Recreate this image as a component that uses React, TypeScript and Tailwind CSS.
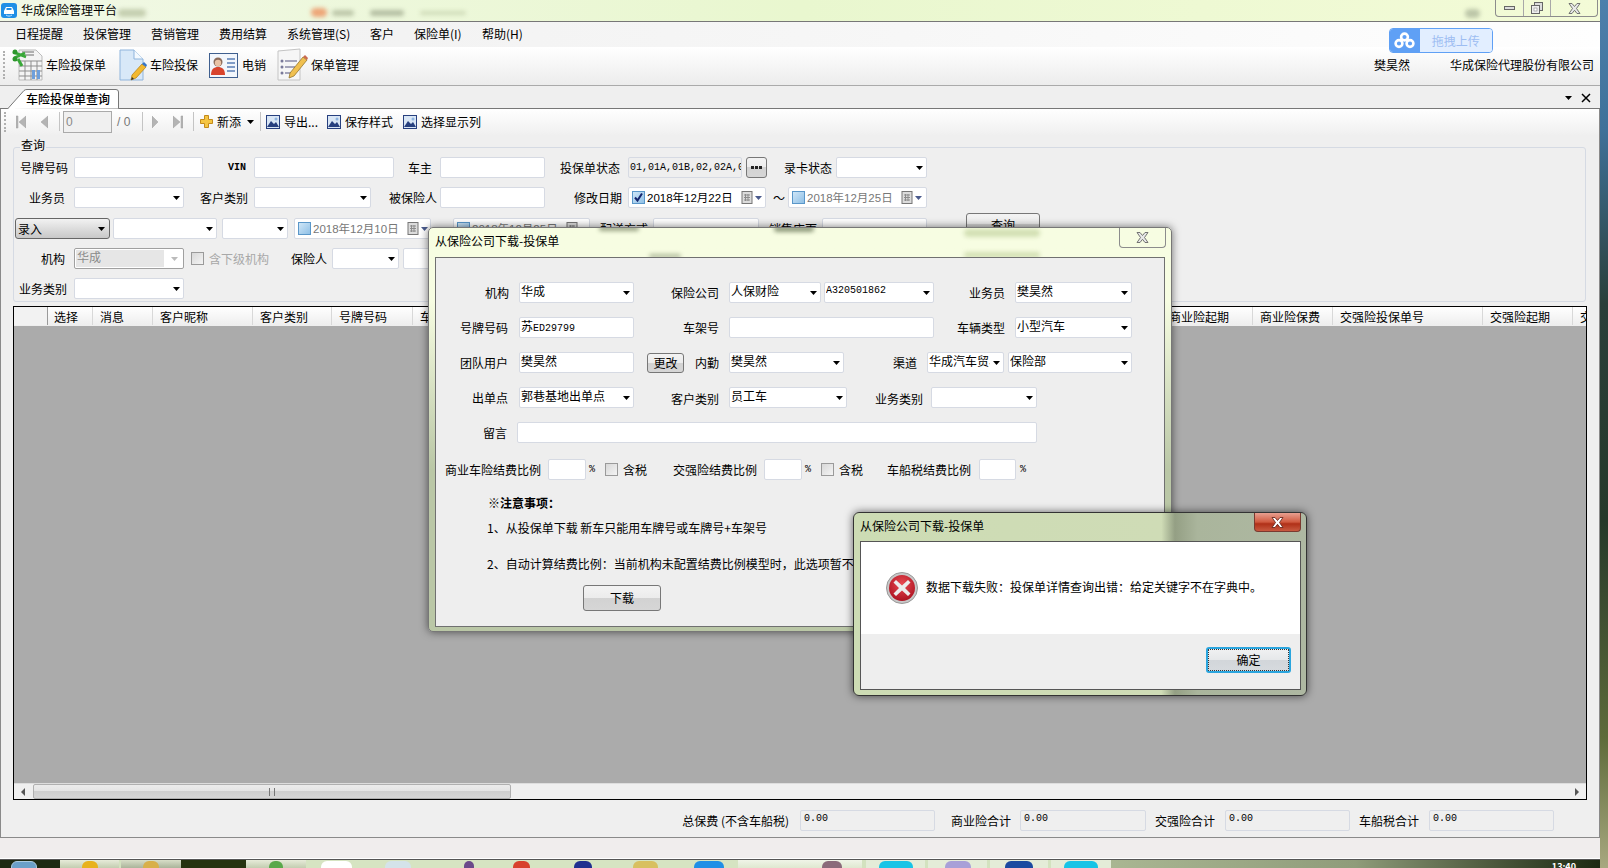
import React from "react";

const MONO = "[font-family:'Liberation_Mono','Noto_Sans_CJK_SC',monospace] text-[10px]";

function Lbl({ className = "", children }: { className?: string; children: React.ReactNode }) {
  return <span className={"shrink-0 whitespace-nowrap text-right text-[12px] leading-[14px] text-black " + className}>{children}</span>;
}
function Arrow({ color = "#000" }: { color?: string }) {
  return (
    <svg width="7" height="4" viewBox="0 0 7 4" className="shrink-0">
      <path d="M0 0h7L3.500 4z" fill={color} />
    </svg>
  );
}
function Input({ className = "", mono = false, children }: { className?: string; mono?: boolean; children?: React.ReactNode }) {
  return (
    <div className={"h-[21px] shrink-0 overflow-hidden whitespace-nowrap rounded-[2px] border border-[#d6dae3] bg-white pl-[1px] pt-[1px] leading-[14px] text-black " + (mono ? MONO + " " : "text-[12px] ") + className}>
      {children}
    </div>
  );
}
function Sel({ className = "", mono = false, children }: { className?: string; mono?: boolean; children?: React.ReactNode }) {
  return (
    <div className={"flex h-[21px] shrink-0 items-center justify-between overflow-hidden rounded-[2px] border border-[#d6dae3] bg-white pl-[1px] pr-[3px] text-[12px] leading-[14px] text-black " + className}>
      <span className={"-mt-[3px] overflow-hidden whitespace-nowrap " + (mono ? MONO : "")}>{children}</span>
      <Arrow />
    </div>
  );
}
function Check({ className = "", on = false, blue = false }: { className?: string; on?: boolean; blue?: boolean }) {
  return (
    <div className={"flex h-[13px] w-[13px] shrink-0 items-center justify-center border " + (blue ? "border-[#5a97c9] bg-gradient-to-br from-[#cfe6f7] to-[#8fc0e6] " : "border-[#9a9a9a] bg-gradient-to-br from-[#d8d8d8] to-[#f4f4f4] ") + className}>
      {on && (
        <svg width="11" height="11" viewBox="0 0 11 11">
          <path d="M2 5.500l2.500 3L9 1.500" fill="none" stroke="#15256e" strokeWidth="2" />
        </svg>
      )}
    </div>
  );
}
function Cal() {
  return (
    <svg width="12" height="13" viewBox="0 0 12 13" className="shrink-0">
      <rect x="1" y="0.500" width="10" height="12" fill="#dcdcdc" stroke="#777" />
      <path d="M3 4h6M3 6.500h6M3 9h6M4.500 3v7M7 3v7" stroke="#8c8c8c" strokeWidth="1" />
    </svg>
  );
}
function DateBox({ className = "", on = false, text, dim = false }: { className?: string; on?: boolean; text: string; dim?: boolean }) {
  return (
    <div className={"flex h-[21px] shrink-0 items-center overflow-hidden rounded-[2px] border border-[#d6dae3] bg-white pl-[3px] " + className}>
      <Check on={on} blue />
      <span className={"ml-[2px] w-[94px] shrink-0 whitespace-nowrap text-[11.5px] leading-[14px] [font-family:'Liberation_Sans','Noto_Sans_CJK_SC',sans-serif] " + (dim ? "text-[#777]" : "text-black")}>{text}</span>
      <Cal />
      <span className="ml-[2px] flex"><Arrow color="#4a5a8c" /></span>
    </div>
  );
}
function Btn({ className = "", children }: { className?: string; children: React.ReactNode }) {
  return (
    <div className={"flex shrink-0 items-center justify-center rounded-[3px] border border-[#777] bg-[linear-gradient(#f3f3f3_0%,#ececec_48%,#d2d2d2_50%,#d6d6d6_100%)] text-[12px] leading-[14px] text-black " + className}>
      {children}
    </div>
  );
}
function PicIcon() {
  return (
    <svg width="14" height="14" viewBox="0 0 14 14" className="shrink-0">
      <rect x="0.500" y="0.500" width="13" height="13" fill="#d9e6f5" stroke="#27407f" />
      <path d="M1 12l4-6 3 3 2-2 3 5z" fill="#27407f" />
      <circle cx="10" cy="4" r="1.500" fill="#8eb4e0" />
    </svg>
  );
}
function Sep({ className = "" }: { className?: string }) {
  return <div className={"h-[19px] w-px shrink-0 bg-[#c4c4c4] " + className} />;
}
function CloseGlyph({ color = "#e8e8e8", stroke = "#666" }: { color?: string; stroke?: string }) {
  return (
    <svg width="13" height="11" viewBox="0 0 13 11">
      <path d="M1 0.500h3l2.500 3 2.500-3h3L8.500 5.500l3.500 5H9l-2.500-3.200L4 10.500H1l3.500-5z" fill={color} stroke={stroke} strokeWidth="0.900" />
    </svg>
  );
}

function Ico1() {
  return (
    <svg width="31" height="32" viewBox="0 0 31 32" className="shrink-0">
      <path d="M7 1h17l6 6v24H7z" fill="#f4f4f4" stroke="#bbb" />
      <path d="M7 12h23M7 17h23M7 22h23M7 27h23M13 12v19M19 12v19M25 12v19" stroke="#8d8d8d" strokeWidth="1" />
      <path d="M10 3h12M10 6h12" stroke="#999" strokeWidth="1.500" />
      <rect x="20" y="21" width="3" height="9" fill="#6d9fdc" />
      <rect x="25" y="21" width="3" height="9" fill="#6d9fdc" />
      <path d="M1 3l13 5M2 9l11-5" stroke="#38a838" strokeWidth="2.500" />
      <circle cx="3" cy="3" r="2.500" fill="#2c962c" />
      <circle cx="3" cy="10" r="2.500" fill="#2c962c" />
      <path d="M6 10l4 7" stroke="#38a838" strokeWidth="3" />
    </svg>
  );
}
function Ico2() {
  return (
    <svg width="28" height="32" viewBox="0 0 28 32" className="shrink-0">
      <path d="M1 1h14l9 9v21H1z" fill="#d8e8f8" stroke="#8fb4dc" />
      <path d="M15 1v9h9" fill="#f4f9fe" stroke="#8fb4dc" />
      <path d="M13 26l-1 5 5-2 10-11-4-3z" fill="#f3b92f" stroke="#b27c10" strokeWidth="0.700" />
      <path d="M23 15l4 3 1-2-3-3z" fill="#3776c8" />
      <path d="M12 31l1-3 2 2z" fill="#333" />
    </svg>
  );
}
function Ico3() {
  return (
    <svg width="29" height="25" viewBox="0 0 29 25" className="shrink-0">
      <rect x="0.500" y="0.500" width="28" height="24" fill="#f2f6fc" stroke="#3f5f8f" />
      <circle cx="9" cy="9" r="4.500" fill="#8a6a5a" />
      <circle cx="9" cy="10" r="3.200" fill="#e9c3a6" />
      <path d="M2 22c0-6 3-8 7-8s7 2 7 8z" fill="#d8442e" />
      <path d="M18 6h8M18 10h8M18 14h8M18 18h8" stroke="#5b7fb5" strokeWidth="1.400" />
    </svg>
  );
}
function Ico4() {
  return (
    <svg width="31" height="34" viewBox="0 0 31 34" className="shrink-0">
      <path d="M1 3l22-2v31H1z" fill="#f6f6f6" stroke="#c4c4c4" />
      <path d="M8 13h12M8 19h10M8 25h11" stroke="#8a8aa6" strokeWidth="1.400" />
      <circle cx="5" cy="13" r="1.500" fill="#7a7a9a" />
      <circle cx="5" cy="19" r="1.500" fill="#7a7a9a" />
      <circle cx="5" cy="25" r="1.500" fill="#7a7a9a" />
      <path d="M13 25l-1 5 5-2 13-16-4-3z" fill="#f0c050" stroke="#8a6a20" strokeWidth="0.700" />
      <path d="M26 9l4 3 1-2-3-3z" fill="#c96a50" />
    </svg>
  );
}
function NavGlyph({ d, w = 10 }: { d: string; w?: number }) {
  return (
    <svg width={w} height="14" viewBox={`0 0 ${w} 14`} className="shrink-0">
      <path d={d} fill="#b4b4b4" stroke="#a0a0a0" strokeWidth="0.500" />
    </svg>
  );
}
function Blur({ className }: { className: string }) {
  return <div className={"absolute rounded-full blur-[2px] " + className} />;
}
function Top({ className }: { className: string }) {
  return <div className={"mt-[1px] h-[8px] shrink-0 rounded-t-[6px] " + className} />;
}

export default function App() {
  return (
    <div className="relative flex h-[868px] w-[1608px] overflow-hidden bg-white [font-family:'Noto_Sans_CJK_SC','Liberation_Sans',sans-serif]">
      <div className="flex h-full w-[1600px] shrink-0 flex-col">
        {/* title */}
        <div className="relative flex h-[22px] shrink-0 items-start justify-between border-b border-[#777] bg-gradient-to-r from-[#f1f8e6] via-[#e9f7cf] to-[#f3fbd7]">
          <Blur className="left-[118px] top-[9px] h-[8px] w-[28px] bg-[#c5cfb0]" />
          <Blur className="left-[311px] top-[8px] h-[9px] w-[16px] bg-[#eda678]" />
          <Blur className="left-[332px] top-[10px] h-[6px] w-[22px] bg-[#bcc6a8]" />
          <Blur className="left-[370px] top-[10px] h-[6px] w-[34px] bg-[#b4bea2]" />
          <Blur className="left-[420px] top-[11px] h-[4px] w-[46px] bg-[#cfdbb8]" />
          <Blur className="left-[1465px] top-[9px] h-[9px] w-[15px] bg-[#bcc6a8]" />
          <div className="flex items-center">
            <svg width="16" height="15" viewBox="0 0 16 15" className="ml-[1px] mt-[3px]">
              <rect width="16" height="15" rx="3" fill="#1f8fe6" />
              <path d="M3 8l2-4h6l2 4v3H3z" fill="#fff" />
              <path d="M5 12c2 1.500 4 1.500 6 0" stroke="#bfe2ff" fill="none" />
              <rect x="5.500" y="5" width="5" height="2" fill="#1f8fe6" />
            </svg>
            <span className="ml-[4px] mt-[1px] text-[12px] leading-[14px] text-black">华成保险管理平台</span>
          </div>
          <div className="mr-[2px] flex h-[17px] items-stretch rounded-b-[4px] border border-t-0 border-[#8c8c8c]">
            <div className="flex w-[28px] items-center justify-center border-r border-[#a8a8a8]"><div className="h-[4px] w-[11px] border border-[#666] bg-[#ddd]" /></div>
            <div className="flex w-[27px] items-center justify-center border-r border-[#a8a8a8]">
              <svg width="12" height="12" viewBox="0 0 12 12"><rect x="3.500" y="0.500" width="8" height="8" fill="#ddd" stroke="#666" /><rect x="0.500" y="3.500" width="8" height="8" fill="#eee" stroke="#666" /><rect x="3" y="6" width="3" height="3" fill="#fff" stroke="#888" strokeWidth="0.600" /></svg>
            </div>
            <div className="flex w-[46px] items-center justify-center"><CloseGlyph /></div>
          </div>
        </div>
        {/* menu */}
        <div className="flex h-[25px] shrink-0 items-center bg-gradient-to-r from-[#f0f0f0] via-[#f6f6f6] to-[#fefefe] pb-[2px] pl-[15px] text-[12px] leading-[14px] text-black">
          <span className="w-[68px] shrink-0">日程提醒</span>
          <span className="w-[68px] shrink-0">投保管理</span>
          <span className="w-[68px] shrink-0">营销管理</span>
          <span className="w-[68px] shrink-0">费用结算</span>
          <span className="w-[83px] shrink-0">系统管理(S)</span>
          <span className="w-[44px] shrink-0">客户</span>
          <span className="w-[68px] shrink-0">保险单(I)</span>
          <span className="shrink-0">帮助(H)</span>
          <div className="z-10 ml-[866px] mt-[6px] flex h-[25px] w-[104px] shrink-0 self-start overflow-hidden rounded-[4px] border border-[#5fa0f5]">
            <div className="flex w-[30px] items-center justify-center bg-[#5fa0f5]">
              <svg width="21" height="17" viewBox="0 0 21 17">
                <g fill="none" stroke="#fff" strokeWidth="2.600">
                  <circle cx="10.500" cy="5" r="3.400" />
                  <circle cx="5" cy="11.500" r="3.400" />
                  <circle cx="16" cy="11.500" r="3.400" />
                </g>
              </svg>
            </div>
            <div className="flex flex-1 items-center justify-center bg-[#e2eeff] text-[12px] text-[#9dbdf2]">拖拽上传</div>
          </div>
        </div>
        {/* toolbar */}
        <div className="flex h-[39px] shrink-0 items-center border-b border-[#aaa] bg-gradient-to-b from-white to-[#ececec] pb-[2px] text-[12px] leading-[14px] text-black">
          <div className="ml-[3px] h-[28px] w-[2px] shrink-0 border-l-2 border-dotted border-[#b0b0b0]" />
          <div className="ml-[7px]"><Ico1 /></div>
          <span className="ml-[3px] w-[60px] shrink-0 whitespace-nowrap">车险投保单</span>
          <div className="ml-[13px]"><Ico2 /></div>
          <span className="ml-[3px] w-[48px] shrink-0 whitespace-nowrap">车险投保</span>
          <div className="ml-[11px]"><Ico3 /></div>
          <span className="ml-[4px] w-[24px] shrink-0 whitespace-nowrap">电销</span>
          <div className="ml-[11px]"><Ico4 /></div>
          <span className="ml-[3px] w-[48px] shrink-0 whitespace-nowrap">保单管理</span>
          <span className="ml-[1015px] w-[36px] shrink-0 whitespace-nowrap">樊昊然</span>
          <span className="ml-[40px] w-[144px] shrink-0 whitespace-nowrap">华成保险代理股份有限公司</span>
        </div>
        {/* tab strip */}
        <div className="flex h-[23px] shrink-0 items-end border-b border-[#777] bg-[#efefef]">
          <div className="relative -mb-px ml-[7px] flex h-[20px] w-[112px] shrink-0 items-center pl-[19px]">
            <svg width="112" height="20" viewBox="0 0 112 20" className="absolute left-0 top-0">
              <path d="M0.500 20L17 1.500Q18 0.500 20 0.500H109Q111.500 0.500 111.500 3V19.500" fill="#fff" stroke="#777" />
            </svg>
            <span className="relative whitespace-nowrap text-[12px] font-medium leading-[14px] text-black">车险投保单查询</span>
          </div>
          <div className="flex-1" />
          <div className="mb-[5px] mr-[9px] flex items-center">
            <Arrow />
            <svg width="10" height="10" viewBox="0 0 10 10" className="ml-[9px]"><path d="M1 1l8 8M9 1l-8 8" stroke="#000" strokeWidth="1.500" /></svg>
          </div>
        </div>
        {/* main */}
        <div className="flex min-h-0 flex-1 flex-col border-b border-l border-r border-[#8a8a8a] bg-[#efefef]">
          {/* sub toolbar */}
          <div className="flex h-[27px] shrink-0 items-center bg-gradient-to-b from-white to-[#efefef] pb-[2px] text-[12px] leading-[14px] text-black">
            <div className="ml-[3px] h-[20px] w-[2px] shrink-0 border-l-2 border-dotted border-[#b0b0b0]" />
            <div className="ml-[10px]"><NavGlyph d="M0 1h2v12H0zM10 1v12L3 7z" /></div>
            <div className="ml-[15px]"><NavGlyph w={7} d="M7 1v12L0 7z" /></div>
            <Sep className="ml-[11px]" />
            <div className="ml-[3px] h-[22px] w-[49px] shrink-0 border border-[#aaa] bg-[#f0f0f0] pl-[2px] pt-[3px] text-[#888] [font-family:'Liberation_Sans',sans-serif]">0</div>
            <span className="ml-[5px] w-[19px] shrink-0 text-[#777] [font-family:'Liberation_Sans',sans-serif]">/ 0</span>
            <Sep className="ml-[6px]" />
            <div className="ml-[9px]"><NavGlyph w={6} d="M0 1v12l6-6z" /></div>
            <div className="ml-[15px]"><NavGlyph d="M0 1v12l7-6zM8 1h2v12H8z" /></div>
            <Sep className="ml-[10px]" />
            <svg width="13" height="13" viewBox="0 0 13 13" className="ml-[6px] shrink-0">
              <path d="M4.500 0.500h4v4h4v4h-4v4h-4v-4h-4v-4h4z" fill="#f5c542" stroke="#c48a1a" />
            </svg>
            <span className="ml-[4px] w-[24px] shrink-0 whitespace-nowrap">新添</span>
            <span className="ml-[6px] flex"><Arrow /></span>
            <Sep className="ml-[6px]" />
            <div className="ml-[5px]"><PicIcon /></div>
            <span className="ml-[4px] w-[34px] shrink-0 whitespace-nowrap">导出...</span>
            <div className="ml-[9px]"><PicIcon /></div>
            <span className="ml-[4px] w-[48px] shrink-0 whitespace-nowrap">保存样式</span>
            <div className="ml-[10px]"><PicIcon /></div>
            <span className="ml-[4px] w-[60px] shrink-0 whitespace-nowrap">选择显示列</span>
          </div>
          {/* query */}
          <div className="relative ml-[12px] mt-[11px] h-[155px] w-[1573px] shrink-0 rounded-[3px] border border-[#d5dae3]">
            <span className="absolute -top-[10px] left-[6px] bg-[#efefef] px-[1px] text-[12px] leading-[14px] text-black">查询</span>
            <div className="mt-[9px] flex h-[21px] items-center">
              <Lbl className="ml-[5px] w-[49px]">号牌号码</Lbl>
              <Input className="ml-[6px] w-[129px]" />
              <span className={"ml-[25px] w-[18px] shrink-0 font-bold leading-[14px] text-black " + MONO}>VIN</span>
              <Input className="ml-[8px] w-[140px]" />
              <Lbl className="ml-[14px] w-[24px]">车主</Lbl>
              <Input className="ml-[8px] w-[105px]" />
              <Lbl className="ml-[15px] w-[60px]">投保单状态</Lbl>
              <Input mono className="ml-[8px] w-[114px] !bg-[#efefef] !pt-[3px]">01,01A,01B,02,02A,0</Input>
              <Btn className="ml-[4px] h-[21px] w-[21px]">
                <svg width="11" height="3" viewBox="0 0 11 3"><path d="M0 0h3v3H0zM4 0h3v3H4zM8 0h3v3H8z" fill="#222" /></svg>
              </Btn>
              <Lbl className="ml-[16px] w-[49px]">录卡状态</Lbl>
              <Sel className="ml-[4px] w-[91px]" />
            </div>
            <div className="mt-[9px] flex h-[21px] items-center">
              <Lbl className="ml-[15px] w-[36px]">业务员</Lbl>
              <Sel className="ml-[9px] w-[110px]" />
              <Lbl className="ml-[15px] w-[49px]">客户类别</Lbl>
              <Sel className="ml-[6px] w-[117px]" />
              <Lbl className="ml-[18px] w-[47px]">被保险人</Lbl>
              <Input className="ml-[4px] w-[105px]" />
              <Lbl className="ml-[28px] w-[49px]">修改日期</Lbl>
              <DateBox className="ml-[6px] w-[138px]" on text="2018年12月22日" />
              <span className="ml-[4px] w-[18px] shrink-0 text-center text-[12px] leading-[14px] text-black">～</span>
              <DateBox className="w-[139px]" dim text="2018年12月25日" />
            </div>
            <div className="mt-[10px] flex h-[21px] items-center">
              <div className="ml-[1px] flex h-[21px] w-[95px] shrink-0 items-center justify-between rounded-[3px] border border-[#666] bg-gradient-to-b from-[#f2f2f2] to-[#c8c8c8] pl-[2px] pr-[4px] text-[12px] leading-[14px] text-black">
                <span>录入</span><Arrow />
              </div>
              <Sel className="ml-[3px] w-[104px]" />
              <Sel className="ml-[5px] w-[66px]" />
              <DateBox className="ml-[6px] w-[137px]" dim text="2018年12月10日" />
              <DateBox className="ml-[22px] w-[137px]" dim text="2018年12月25日" />
              <Lbl className="ml-[8px] w-[50px]">配送方式</Lbl>
              <Sel className="ml-[5px] w-[106px]" />
              <Lbl className="ml-[10px] w-[46px]">销售店面</Lbl>
              <Sel className="ml-[7px] w-[105px]" />
              <Btn className="ml-[39px] -mt-[8px] h-[23px] w-[74px]">查询</Btn>
            </div>
            <div className="mt-[9px] flex h-[21px] items-center">
              <Lbl className="ml-[27px] w-[24px]">机构</Lbl>
              <div className="ml-[9px] flex h-[21px] w-[110px] shrink-0 items-center justify-between rounded-[2px] border border-[#a0a0a0] bg-white p-[1px] pr-[5px]">
                <span className="flex h-full w-[88px] bg-[#e6e6e6] pl-[1px] text-[12px] leading-[14px] text-[#8a8a8a]">华成</span>
                <Arrow color="#bbb" />
              </div>
              <Check className="ml-[7px]" />
              <Lbl className="ml-[5px] w-[60px] !text-[#a8a8a8]">含下级机构</Lbl>
              <Lbl className="ml-[22px] w-[36px]">保险人</Lbl>
              <Sel className="ml-[5px] w-[67px]" />
              <Input className="ml-[4px] w-[100px]" />
            </div>
            <div className="mt-[9px] flex h-[21px] items-center">
              <Lbl className="ml-[3px] w-[50px]">业务类别</Lbl>
              <Sel className="ml-[7px] w-[110px]" />
            </div>
          </div>
          {/* grid */}
          <div className="ml-[12px] mt-[4px] flex h-[494px] w-[1574px] shrink-0 flex-col border border-black bg-[#ababab]">
            <div className="flex h-[19px] shrink-0 border-b border-[#eee] bg-gradient-to-b from-white to-[#eeeeee] text-[12px] leading-[20px] text-black">
              <div className="w-[34px] shrink-0 border-r border-[#9a9a9a] bg-[#f2f2f2]" />
              <div className="w-[45px] shrink-0 overflow-hidden border-r border-[#d8d8d8] pl-[6px]">选择</div>
              <div className="w-[60px] shrink-0 overflow-hidden border-r border-[#d8d8d8] pl-[7px]">消息</div>
              <div className="w-[100px] shrink-0 overflow-hidden border-r border-[#d8d8d8] pl-[7px]">客户昵称</div>
              <div className="w-[79px] shrink-0 overflow-hidden border-r border-[#d8d8d8] pl-[7px]">客户类别</div>
              <div className="w-[81px] shrink-0 overflow-hidden border-r border-[#d8d8d8] pl-[7px]">号牌号码</div>
              <div className="w-[749px] shrink-0 overflow-hidden border-r border-[#d8d8d8] pl-[7px]">车架号</div>
              <div className="w-[91px] shrink-0 overflow-hidden border-r border-[#d8d8d8] pl-[7px]">商业险起期</div>
              <div className="w-[80px] shrink-0 overflow-hidden border-r border-[#d8d8d8] pl-[7px]">商业险保费</div>
              <div className="w-[150px] shrink-0 overflow-hidden border-r border-[#d8d8d8] pl-[7px]">交强险投保单号</div>
              <div className="w-[90px] shrink-0 overflow-hidden border-r border-[#d8d8d8] pl-[7px]">交强险起期</div>
              <div className="flex-1 overflow-hidden whitespace-nowrap pl-[7px]">交</div>
            </div>
            <div className="flex-1 bg-[#ababab]" />
            <div className="flex h-[16px] shrink-0 items-center border-t border-[#ddd] bg-[#efefef]">
              <svg width="4" height="8" viewBox="0 0 4 8" className="ml-[7px] shrink-0"><path d="M4 0v8L0 4z" fill="#555" /></svg>
              <div className="ml-[8px] flex h-[15px] w-[478px] shrink-0 items-center justify-center rounded-[2px] border border-[#b0b0b0] bg-[linear-gradient(#ececec_0%,#e4e4e4_45%,#cfcfcf_50%,#d6d6d6_100%)]">
                <div className="h-[8px] w-[6px] border-x border-[#777] bg-[linear-gradient(90deg,transparent_40%,#777_40%,#777_60%,transparent_60%)]" />
              </div>
              <div className="flex-1" />
              <svg width="4" height="8" viewBox="0 0 4 8" className="mr-[7px] shrink-0"><path d="M0 0v8l4-4z" fill="#555" /></svg>
            </div>
          </div>
          {/* footer */}
          <div className="flex flex-1 items-center pt-[3px]">
            <Lbl className="ml-[681px] mt-[2px] w-[107px]">总保费 (不含车船税)</Lbl>
            <Input mono className="ml-[11px] w-[135px] !bg-[#efefef] !pl-[3px]">0.00</Input>
            <Lbl className="ml-[16px] mt-[2px] w-[59px]">商业险合计</Lbl>
            <Input mono className="ml-[10px] w-[126px] !bg-[#efefef] !pl-[3px]">0.00</Input>
            <Lbl className="ml-[9px] mt-[2px] w-[59px]">交强险合计</Lbl>
            <Input mono className="ml-[11px] w-[125px] !bg-[#efefef] !pl-[3px]">0.00</Input>
            <Lbl className="ml-[9px] mt-[2px] w-[58px]">车船税合计</Lbl>
            <Input mono className="ml-[12px] w-[125px] !bg-[#efefef] !pl-[3px]">0.00</Input>
          </div>
        </div>
        {/* status bar */}
        <div className="h-[20px] shrink-0 bg-[#f0eded]" />
        <div className="h-[1px] shrink-0 bg-white" />
        {/* taskbar */}
        <div className="flex h-[9px] shrink-0 overflow-hidden border-t border-[#555] bg-[#d3e2bf]">
          <div className="flex w-[60px] shrink-0 justify-start bg-[#1d2a12] pl-[11px]"><Top className="w-[26px] border border-[#aacbe0] bg-[#6aa0c8]" /></div>
          <div className="flex w-[59px] shrink-0 justify-center bg-gradient-to-b from-[#e7ebd9] to-[#c3cdb0]"><Top className="w-[16px] bg-[#e8b21c]" /></div>
          <div className="ml-[2px] flex w-[60px] shrink-0 justify-center bg-gradient-to-b from-[#d8dec8] to-[#aab49a]"><Top className="w-[16px] bg-[#d8b04a]" /></div>
          <div className="w-[65px] shrink-0 bg-[#26330f]" />
          <div className="flex w-[60px] shrink-0 justify-center bg-gradient-to-b from-[#e7ebd9] to-[#c3cdb0]"><Top className="w-[14px] bg-[#5aa84a]" /></div>
          <div className="flex flex-1 items-start bg-[#d6e4c2]">
            <Top className="ml-[15px] w-[31px] bg-white" />
            <Top className="ml-[33px] w-[26px] bg-[#d4e3ea]" />
            <Top className="ml-[53px] w-[10px] bg-[#6a4a8a]" />
            <Top className="ml-[39px] w-[17px] bg-[#d8402c]" />
            <Top className="ml-[44px] w-[18px] bg-[#1f2f8f]" />
            <Top className="ml-[41px] w-[25px] bg-[#d8c060]" />
            <Top className="ml-[36px] w-[30px] bg-[#1f8fe6]" />
          </div>
          <div className="flex w-[124px] shrink-0 justify-end bg-gradient-to-b from-[#f0f4e8] to-[#dfe8d0] pr-[20px]"><Top className="w-[20px] bg-[#8a6a7a]" /></div>
          <div className="ml-[4px] flex w-[59px] shrink-0 justify-center bg-[#e4ecd8]"><Top className="w-[34px] bg-[#16c4e6]" /></div>
          <div className="ml-[3px] flex w-[59px] shrink-0 justify-center bg-[#e4ecd8]"><Top className="w-[26px] bg-[#a8a0d8]" /></div>
          <div className="ml-[3px] flex w-[58px] shrink-0 justify-center bg-[#e4ecd8]"><Top className="w-[28px] bg-[#1a4aa0]" /></div>
          <div className="ml-[3px] flex w-[60px] shrink-0 justify-center bg-[#e4ecd8]"><Top className="w-[34px] bg-[#16c4e6]" /></div>
          <div className="flex w-[489px] shrink-0 justify-end bg-gradient-to-r from-[#a9b692] via-[#8f9c7a] to-[#1d2a12] pr-[24px]">
            <span className="mt-[2px] text-[9px] font-bold leading-[9px] text-white">13:40</span>
          </div>
        </div>
      </div>
      {/* wallpaper strip */}
      <div className="h-full w-[8px] shrink-0 bg-[linear-gradient(#4d80ac_0%,#3f7199_15%,#2a3f3a_35%,#26392a_60%,#5e6b3a_85%,#a8a880_100%)]" />

      {/* dialog 1 */}
      <div className="absolute left-[428px] top-[227px] h-[405px] w-[744px] overflow-hidden rounded-[5px] border border-[#777] bg-gradient-to-b from-[#f7fde2] from-[18%] to-[#bac7a6] to-[60%] shadow-[0_0_9px_rgba(0,0,0,0.55)]">
        <Blur className="left-[170px] top-[-2px] h-[5px] w-[40px] bg-[#9aa486]" />
        <Blur className="left-[345px] top-[-2px] h-[6px] w-[40px] bg-[#8f9a7c]" />
        <Blur className="left-[535px] top-[1px] h-[8px] w-[76px] bg-[#d3e0b4]" />
        <Blur className="left-[535px] top-[24px] h-[6px] w-[76px] bg-[#d3e0b4]" />
        <Blur className="left-[220px] top-[26px] h-[4px] w-[32px] bg-[#b0bb9c]" />
        <div className="relative flex h-[29px] items-start justify-between">
          <span className="ml-[6px] mt-[6px] text-[12px] leading-[14px] text-black">从保险公司下载-投保单</span>
          <div className="mr-[5px] flex h-[20px] w-[47px] items-center justify-center rounded-b-[4px] border border-t-0 border-[#8c8c8c]"><CloseGlyph /></div>
        </div>
        <div className="absolute left-[6px] top-[29px] h-[370px] w-[730px] border border-[#707070] bg-[#eeeeee]">
          <div className="mt-[24px] flex h-[21px] items-center">
            <Lbl className="ml-[49px] w-[24px]">机构</Lbl>
            <Sel className="ml-[10px] w-[115px]">华成</Sel>
            <Lbl className="ml-[37px] w-[48px]">保险公司</Lbl>
            <Sel className="ml-[10px] w-[92px]">人保财险</Sel>
            <Sel mono className="ml-[3px] w-[110px]">A320501862</Sel>
            <Lbl className="ml-[35px] w-[36px]">业务员</Lbl>
            <Sel className="ml-[10px] w-[117px]">樊昊然</Sel>
          </div>
          <div className="mt-[14px] flex h-[21px] items-center">
            <Lbl className="ml-[24px] w-[48px]">号牌号码</Lbl>
            <Input className="ml-[11px] w-[115px]">苏<span className={MONO}>ED29799</span></Input>
            <Lbl className="ml-[49px] w-[36px]">车架号</Lbl>
            <Input className="ml-[10px] w-[205px]" />
            <Lbl className="ml-[23px] w-[48px]">车辆类型</Lbl>
            <Sel className="ml-[10px] w-[117px]">小型汽车</Sel>
          </div>
          <div className="mt-[14px] flex h-[21px] items-center">
            <Lbl className="ml-[24px] w-[48px]">团队用户</Lbl>
            <Input className="ml-[11px] w-[115px]">樊昊然</Input>
            <Btn className="ml-[13px] h-[20px] w-[37px]">更改</Btn>
            <Lbl className="ml-[11px] w-[24px]">内勤</Lbl>
            <Sel className="ml-[10px] w-[115px]">樊昊然</Sel>
            <Lbl className="ml-[49px] w-[24px]">渠道</Lbl>
            <Sel className="ml-[10px] w-[77px]"><span className="inline-block w-[61px] overflow-hidden align-top">华成汽车贸易</span></Sel>
            <Sel className="ml-[4px] w-[124px]">保险部</Sel>
          </div>
          <div className="mt-[14px] flex h-[21px] items-center">
            <Lbl className="ml-[36px] w-[36px]">出单点</Lbl>
            <Sel className="ml-[11px] w-[115px]">郭巷基地出单点</Sel>
            <Lbl className="ml-[37px] mt-[3px] w-[48px]">客户类别</Lbl>
            <Sel className="ml-[10px] w-[118px]">员工车</Sel>
            <Lbl className="ml-[28px] mt-[3px] w-[48px]">业务类别</Lbl>
            <Sel className="ml-[8px] w-[106px]" />
          </div>
          <div className="mt-[14px] flex h-[21px] items-center">
            <Lbl className="ml-[47px] w-[24px]">留言</Lbl>
            <Input className="ml-[10px] w-[520px]" />
          </div>
          <div className="mt-[16px] flex h-[21px] items-center">
            <Lbl className="ml-[9px] w-[96px]">商业车险结费比例</Lbl>
            <Input className="ml-[7px] w-[38px]" />
            <span className={"ml-[3px] w-[6px] shrink-0 " + MONO}>%</span>
            <Check className="ml-[10px]" />
            <Lbl className="ml-[5px] w-[24px]">含税</Lbl>
            <Lbl className="ml-[26px] w-[84px]">交强险结费比例</Lbl>
            <Input className="ml-[7px] w-[38px]" />
            <span className={"ml-[3px] w-[6px] shrink-0 " + MONO}>%</span>
            <Check className="ml-[10px]" />
            <Lbl className="ml-[5px] w-[24px]">含税</Lbl>
            <Lbl className="ml-[24px] w-[84px]">车船税结费比例</Lbl>
            <Input className="ml-[8px] w-[37px]" />
            <span className={"ml-[4px] w-[6px] shrink-0 " + MONO}>%</span>
          </div>
          <div className="ml-[52px] mt-[16px] text-[12px] font-bold leading-[14px] text-black">※注意事项：</div>
          <div className="ml-[51px] mt-[11px] whitespace-nowrap text-[12px] leading-[14px] text-black">1、从投保单下载 新车只能用车牌号或车牌号+车架号</div>
          <div className="ml-[51px] mt-[22px] whitespace-nowrap text-[12px] leading-[14px] text-black">2、自动计算结费比例：当前机构未配置结费比例模型时，此选项暂不可用</div>
          <Btn className="ml-[147px] mt-[14px] h-[26px] w-[78px]">下载</Btn>
        </div>
      </div>

      {/* dialog 2 */}
      <div className="absolute left-[853px] top-[512px] h-[184px] w-[454px] overflow-hidden rounded-[6px] border border-[#333] bg-[linear-gradient(90deg,#cddcb4_0%,#cfdcb6_68%,#949f84_71%,#aab59c_76%,#aeb8a2_100%)] shadow-[0_0_8px_rgba(0,0,0,0.6)]">
        <div className="relative flex h-[28px] items-start justify-between">
          <span className="ml-[6px] mt-[6px] text-[12px] leading-[14px] text-black">从保险公司下载-投保单</span>
          <div className="mr-[5px] flex h-[19px] w-[47px] items-center justify-center rounded-b-[4px] border border-t-0 border-[#7a3a30] bg-[linear-gradient(#e8a090_0%,#d05a40_50%,#b03018_60%,#c85a40_100%)]"><CloseGlyph color="#fff" stroke="#6a2a20" /></div>
        </div>
        <div className="ml-[6px] flex h-[149px] w-[441px] flex-col border border-[#555] bg-white">
          <div className="flex h-[92px] items-center bg-white">
            <svg width="32" height="32" viewBox="0 0 32 32" className="ml-[25px] shrink-0">
              <defs>
                <radialGradient id="er" cx="50%" cy="35%" r="70%">
                  <stop offset="0%" stopColor="#ea4a52" />
                  <stop offset="100%" stopColor="#a80f1e" />
                </radialGradient>
              </defs>
              <circle cx="16" cy="16" r="15.500" fill="#c8c8c8" stroke="#999" />
              <circle cx="16" cy="16" r="13" fill="url(#er)" />
              <path d="M10 8l6 5.500L22 8l2.500 2.500L19 16l5.500 5.500L22 24l-6-5.500L10 24l-2.500-2.500L13 16 7.500 10.500z" fill="#ececec" />
            </svg>
            <span className="ml-[8px] -mt-[3px] whitespace-nowrap text-[12px] leading-[14px] text-black">数据下载失败：投保单详情查询出错：给定关键字不在字典中。</span>
          </div>
          <div className="flex flex-1 justify-end bg-[#eeeeee] pr-[9px] pt-[13px]">
            <div className="flex h-[26px] w-[85px] items-center justify-center rounded-[3px] border-2 border-[#2aa5de] bg-[linear-gradient(#f0f1f2_0%,#e6e8ea_48%,#d2d6da_50%,#d6dade_100%)] text-[12px] leading-[14px] text-black outline-1 -outline-offset-3 outline-dotted outline-[#333]">确定</div>
          </div>
        </div>
      </div>
    </div>
  );
}
